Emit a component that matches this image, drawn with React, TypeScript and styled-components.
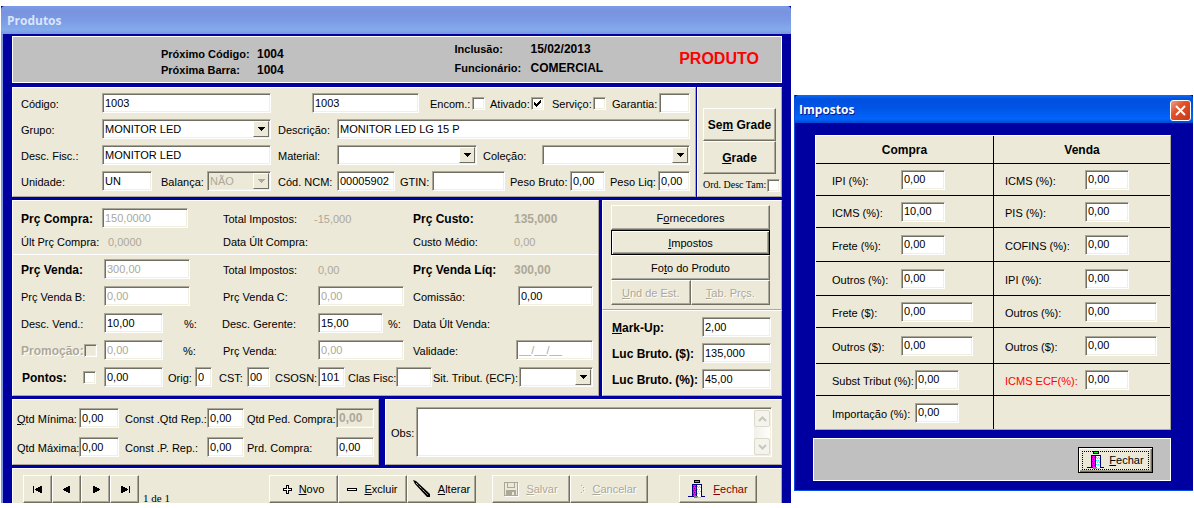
import React, { useId } from "react";
import styled, { createGlobalStyle, css } from "styled-components";

const face = "#ece9d8";
const navy = "#0000a0";
const shade = "#aca899";
const dark = "#716f64";

const GlobalStyle = createGlobalStyle`
  *, *::before, *::after { box-sizing: border-box; }
  body { margin: 0; background: #fff; }
  body, input, select, textarea, button {
    font-family: "Liberation Sans", Arial, sans-serif;
    font-size: 11px;
    line-height: 16px;
    color: #000;
  }
`;

const raised = css`
  border: 1px solid;
  border-color: #fff ${shade} ${shade} #fff;
`;
const sunken = css`
  border: 1px solid;
  border-color: ${shade} #fff #fff ${shade};
  box-shadow: inset 1px 1px ${dark}, inset -1px -1px #f1efe2;
`;
const etched = css`
  color: ${shade};
  text-shadow: 1px 1px #fff;
`;
const strong = css`
  font-weight: bold;
  font-size: 12px;
`;

const Page = styled.main`
  display: grid;
  grid-template-columns: minmax(0, 790fr) minmax(0, 399fr);
  gap: 3px;
  align-items: start;
  padding: 6px 1px 4px;
`;
const ProductWindow = styled.section`
  background: ${navy};
`;
const TaxWindow = styled.section`
  margin-top: 89px;
  background: ${navy};
  border: solid #0a4fe0;
  border-width: 0 0 1px 1px;
`;
const TitleBar = styled.header<{ $active?: boolean }>`
  display: flex;
  align-items: center;
  justify-content: space-between;
  height: 28px;
  padding: 2px 2px 0 ${(p) => (p.$active ? 4 : 6)}px;
  border-radius: 4px 4px 0 0;
  background: ${(p) =>
    p.$active
      ? "linear-gradient(#0a6cf5 0, #0050e0 14%, #0054e6 45%, #0265fb 85%, #0048cf 100%)"
      : "linear-gradient(#7a9be6 0, #7a93df 20%, #7b9ae4 50%, #83abec 85%, #7b96df 100%)"};
`;
const Title = styled.h1<{ $active?: boolean }>`
  margin: 0;
  font: 700 12px/18px "Open Sans", "Noto Sans", sans-serif;
  color: ${(p) => (p.$active ? "#fff" : "#dbe5f9")};
  text-shadow: ${(p) => (p.$active ? "1px 1px #0a1883" : "none")};
`;
const CloseButton = styled.button`
  display: grid;
  place-items: center;
  width: 21px;
  height: 21px;
  padding: 0;
  border: 1px solid #fff;
  border-radius: 3px;
  background: linear-gradient(135deg, #f0a088, #e0512c 40%, #c83a16);
`;

const ProductBody = styled.div`
  display: grid;
  grid-template-columns: minmax(0, 1fr);
  gap: 3px;
  padding: 2px 9px 0;
  border-left: 2px solid #7b96df;
`;
const Split = styled.div<{ $cols: string; $gap: number }>`
  display: grid;
  grid-template-columns: ${(p) => p.$cols};
  gap: ${(p) => p.$gap}px;
`;
const Stack = styled.div`
  display: flex;
  flex-direction: column;
`;
const Panel = styled.div<{ $pad: string; $gap?: number }>`
  ${raised}
  display: flex;
  flex-direction: column;
  gap: ${(p) => p.$gap ?? 0}px;
  padding: ${(p) => p.$pad};
  background: ${face};
`;
const Banner = styled.div`
  display: grid;
  grid-template-columns: 294fr 225fr 102fr;
  align-items: end;
  height: 47px;
  margin-bottom: 1px;
  padding: 0 0 4px 148px;
  border: 1px solid #fff;
  background: #c0c0c0;
`;
const Facts = styled.dl<{ $first: number; $line: number }>`
  display: grid;
  grid-template-columns: ${(p) => p.$first}px auto;
  margin: 0;
  font-weight: bold;
  line-height: ${(p) => p.$line}px;
  white-space: nowrap;
  dd { margin: 0; font-size: 12px; }
`;
const BannerName = styled.strong`
  align-self: center;
  padding-top: 2px;
  font: bold 16px/20px "Liberation Sans", Arial, sans-serif;
  color: #f00;
`;

const Row = styled.div<{ $h?: number }>`
  display: flex;
  align-items: center;
  height: ${(p) => p.$h ?? 20}px;
  white-space: nowrap;
`;
const Label = styled.label<{ $w?: number; $pl?: number; $bold?: boolean; $off?: boolean }>`
  flex: none;
  width: ${(p) => (p.$w ? p.$w + "px" : "auto")};
  padding: 2px 0 0 ${(p) => p.$pl ?? 0}px;
  ${(p) => p.$bold && strong}
  ${(p) => p.$off && etched}
`;
const Value = styled.output<{ $w?: number; $bold?: boolean }>`
  flex: none;
  width: ${(p) => (p.$w ? p.$w + "px" : "auto")};
  padding-top: 2px;
  color: ${shade};
  ${(p) => p.$bold && strong}
`;
const Input = styled.input<{ $w?: number; $ml?: number; $flat?: boolean; $bold?: boolean }>`
  ${sunken}
  flex: ${(p) => (p.$w ? `0 0 ${p.$w}px` : "1 1 0")};
  width: 0;
  min-width: 0;
  height: 20px;
  margin: 0 0 0 ${(p) => p.$ml ?? 0}px;
  padding: 0 2px 1px;
  border-radius: 0;
  background: ${(p) => (p.$flat ? face : "#fff")};
  ${(p) => p.$bold && strong}
  &:disabled { color: ${shade}; }
`;
const SelectFrame = styled.span<{ $w?: number; $off?: boolean }>`
  ${sunken}
  display: flex;
  flex: ${(p) => (p.$w ? `0 0 ${p.$w}px` : "1 1 0")};
  min-width: 0;
  height: 20px;
  padding: 1px;
  background: ${(p) => (p.$off ? face : "#fff")};
`;
const NativeSelect = styled.select`
  flex: 1 1 0;
  min-width: 0;
  padding: 0 1px 1px;
  border: 0;
  appearance: none;
  background: transparent;
  &:disabled { color: ${shade}; opacity: 1; }
`;
const Arrow = styled.span`
  ${raised}
  display: grid;
  place-items: center;
  flex: 0 0 16px;
  border-color: #fff ${dark} ${dark} #fff;
  background: ${face};
`;
const CheckFrame = styled.span<{ $ml?: number; $mr?: number }>`
  display: inline-grid;
  flex: none;
  margin: 0 ${(p) => p.$mr ?? 0}px 0 ${(p) => p.$ml ?? 0}px;
  > * { grid-area: 1 / 1; place-self: center; }
  svg { pointer-events: none; }
`;
const NativeCheck = styled.input`
  ${sunken}
  width: 13px;
  height: 13px;
  margin: 0;
  appearance: none;
  background: #fff;
  &:disabled { background: ${face}; }
`;
const Rule = styled.hr`
  width: 100%;
  height: 1px;
  margin: 2px 0 4px;
  border: 0;
  background: #fff;
`;
const Fields = styled.div<{ $gap: number }>`
  display: grid;
  grid-template-columns: minmax(0, 1fr);
  gap: ${(p) => p.$gap}px;
  padding: 0 5px 0 8px;
`;

const Button = styled.button<{ $w?: number; $h?: number; $bold?: boolean; $default?: boolean; $color?: string }>`
  display: flex;
  align-items: center;
  justify-content: center;
  gap: 7px;
  flex: ${(p) => (p.$w ? `0 0 ${p.$w}px` : "1 1 0")};
  min-width: 0;
  height: ${(p) => p.$h ?? 25}px;
  min-height: ${(p) => p.$h ?? 25}px;
  padding: 0;
  border: 1px solid;
  border-color: ${(p) => (p.$default ? "#000" : `#fff ${dark} ${dark} #fff`)};
  box-shadow: ${(p) =>
    p.$default ? `inset 1px 1px #fff, inset -1px -1px ${dark}, inset -2px -2px ${shade}` : `inset -1px -1px ${shade}`};
  border-radius: 0;
  background: ${face};
  color: ${(p) => p.$color ?? "#000"};
  white-space: nowrap;
  ${(p) => p.$bold && strong}
  &:disabled { ${etched} }
  svg { flex: none; }
`;
const ButtonPair = styled.div`
  display: flex;
`;
const SmallLabel = styled.label`
  font: 10px/12px "Liberation Serif", serif;
`;
const MemoRow = styled.div`
  display: flex;
  align-items: center;
`;
const Memo = styled.div`
  ${sunken}
  display: flex;
  flex: 1 1 0;
  height: 50px;
  padding: 2px 1px 1px 2px;
  background: #fff;
`;
const MemoText = styled.textarea`
  flex: 1 1 0;
  min-width: 0;
  border: 0;
  padding: 0 2px;
  resize: none;
  overflow: hidden;
  background: transparent;
`;
const ScrollTrack = styled.div`
  display: flex;
  flex-direction: column;
  justify-content: space-between;
  width: 16px;
  background: linear-gradient(90deg, #f3f0ea, #fefefb);
`;
const ScrollButton = styled.button`
  display: grid;
  place-items: center;
  width: 16px;
  height: 17px;
  padding: 0;
  border: 1px solid #dcdac8;
  border-radius: 2px;
  background: #f4f3ee;
`;
const Toolbar = styled.div`
  display: flex;
  align-items: flex-end;
  padding: 6px 24px 0 10px;
  border: solid #fff;
  border-width: 1px 0 0 1px;
  border-right: 1px solid ${shade};
  background: ${face};
`;
const Group = styled.div<{ $mr?: number }>`
  display: flex;
  flex: none;
  margin-right: ${(p) => p.$mr ?? 0}px;
`;
const Position = styled.span`
  flex: 1 1 0;
  padding-left: 4px;
  font: 11px/10px "Liberation Serif", serif;
  white-space: nowrap;
`;

const TaxBody = styled.div`
  padding: 12px 22px 9px 18px;
`;
const TaxTable = styled.table`
  ${raised}
  width: calc(100% - 2px);
  margin: 0 0 8px 2px;
  border-collapse: separate;
  border-spacing: 0;
  table-layout: fixed;
  background: ${face};
  th, td { padding: 0; border-top: 1px solid #000; }
  th { border-top: 0; font-size: 12px; }
  th + th, td + td { border-left: 1px solid #000; }
`;
const TaxRow = styled.tr<{ $h: number }>`
  height: ${(p) => p.$h}px;
`;
const TaxField = styled.div<{ $pl: number; $red?: boolean }>`
  display: flex;
  align-items: center;
  padding-left: ${(p) => p.$pl}px;
  white-space: nowrap;
  color: ${(p) => (p.$red ? "#f00" : "inherit")};
`;
const TaxFooter = styled.footer`
  display: flex;
  justify-content: flex-end;
  padding: 8px 17px 7px;
  border: 1px solid #fff;
  background: #c0c0c0;
`;
const FocusRing = styled.span`
  display: flex;
  align-items: center;
  gap: 4px;
  height: 19px;
  padding: 0 4px;
  border: 1px dotted #000;
`;

function Down({ off }: { off?: boolean }) {
  return (
    <svg width="7" height="4" shapeRendering="crispEdges" aria-hidden="true">
      <path d="M0 0h7v1h-1v1h-1v1h-1v1h-1v-1h-1v-1h-1v-1h-1z" fill={off ? shade : "#000"} />
    </svg>
  );
}
type SelectProps = { id: string; w?: number; value?: string; off?: boolean };
function Select({ id, w, value = "", off }: SelectProps) {
  return (
    <SelectFrame $w={w} $off={off}>
      <NativeSelect id={id} disabled={off} defaultValue={value}>
        <option value={value}>{value}</option>
      </NativeSelect>
      <Arrow><Down off={off} /></Arrow>
    </SelectFrame>
  );
}
type CheckProps = { id: string; on?: boolean; off?: boolean; ml?: number; mr?: number };
function Check({ id, on, off, ml, mr }: CheckProps) {
  return (
    <CheckFrame $ml={ml} $mr={mr}>
      <NativeCheck type="checkbox" id={id} defaultChecked={on} disabled={off} />
      {on && (
        <svg width="7" height="7" shapeRendering="crispEdges" aria-hidden="true">
          <path d="M0 2h1v1h1v1h1v-1h1v-1h1v-1h1v-1h1v3h-1v1h-1v1h-1v1h-1v1h-1v-1h-1v-1h-1z" />
        </svg>
      )}
    </CheckFrame>
  );
}
type FieldProps = {
  label: React.ReactNode;
  w: number;
  pl?: number;
  bold?: boolean;
  value?: string;
  iw?: number;
  off?: boolean;
  flat?: boolean;
  boldValue?: boolean;
};
function Field({ label, w, pl, bold, value = "", iw, off, flat, boldValue }: FieldProps) {
  const id = useId();
  return (
    <>
      <Label htmlFor={id} $w={w} $pl={pl} $bold={bold}>{label}</Label>
      <Input id={id} $w={iw} defaultValue={value} disabled={off} $flat={flat} $bold={boldValue} />
    </>
  );
}
function Read({ label, w, pl, bold, value = "", vw }: FieldProps & { vw?: number }) {
  const id = useId();
  return (
    <>
      <Label htmlFor={id} $w={w} $pl={pl} $bold={bold}>{label}</Label>
      <Value id={id} $w={vw} $bold={bold}>{value}</Value>
    </>
  );
}

function NavIcon({ d }: { d: string }) {
  return (
    <svg width="12" height="9" viewBox="0 0 12 9" shapeRendering="crispEdges" aria-hidden="true">
      <path d={d} />
    </svg>
  );
}
function DoorIcon() {
  return (
    <svg width="18" height="19" viewBox="0 0 18 19" shapeRendering="crispEdges" aria-hidden="true">
      <path d="M6 0h6v3H6z" />
      <path d="M7 1h4v1H7z" fill="#0f0" />
      <path d="M4 4h10v12h3v1H0v-1h4z" fill="#000080" />
      <path d="M5 5h4v11H5z" fill="#f0f" />
      <path d="M5 6h1v1h-1zM7 6h1v1h-1zM6 8h1v1h-1zM8 8h1v1h-1zM5 10h1v1h-1zM7 10h1v1h-1zM6 12h1v1h-1zM8 12h1v1h-1zM5 14h1v1h-1zM7 14h1v1h-1z" fill="#800080" />
      <path d="M8 5h1v12H8z" fill="#000080" />
      <path d="M9 5h4v12H9z" fill="#fff" />
      <path d="M9 6h1v1h-1zM11 6h1v1h-1zM10 7h1v1h-1zM12 7h1v1h-1zM9 9h1v1h-1zM11 9h1v1h-1zM10 11h1v1h-1zM12 11h1v1h-1zM9 13h1v1h-1zM11 13h1v1h-1z" fill="#0ff" />
      <path d="M6 16h4v2H6z" fill="#808080" />
      <path d="M9 17h4v1H9z" fill="#c0c0c0" />
    </svg>
  );
}
function PlusIcon() {
  return (
    <svg width="9" height="9" viewBox="0 0 9 9" shapeRendering="crispEdges" aria-hidden="true">
      <path d="M3 0h3v3h3v3H6v3H3V6H0V3h3z" />
      <path d="M4 1h1v3h3v1H5v3H4V5H1V4h3z" fill="#fff" />
    </svg>
  );
}
function MinusIcon() {
  return (
    <svg width="10" height="3" viewBox="0 0 10 3" shapeRendering="crispEdges" aria-hidden="true">
      <path d="M0 0h10v3H0z" />
      <path d="M1 1h8v1H1z" fill="#fff" />
    </svg>
  );
}
function PenIcon() {
  return (
    <svg width="18" height="18" viewBox="0 0 18 18" aria-hidden="true">
      <path d="M0 0l3 1 14 13v3h-3L2 4z" />
      <path d="M3 3l9 9" stroke="#fff" strokeWidth="1" strokeDasharray="1 1" />
      <path d="M12 12l3 3" stroke="#808080" strokeWidth="1" />
    </svg>
  );
}
function DiskIcon() {
  return (
    <svg width="15" height="15" viewBox="0 0 15 15" shapeRendering="crispEdges" aria-hidden="true">
      <path d="M14 1h1v14H1v-1h13z" fill="#fff" />
      <path d="M0 0h14v14H0zM1 1v12h1V8h10v5h1V1h-2v5H3V1zM4 1v4h6V1z" fill={shade} fillRule="evenodd" />
      <path d="M3 9h8v4H3z" fill={shade} />
      <path d="M8 10h2v3H8z" fill={face} />
    </svg>
  );
}
function CancelIcon() {
  return (
    <svg width="4" height="9" viewBox="0 0 4 9" shapeRendering="crispEdges" aria-hidden="true">
      <path d="M1 1h1v1H1zM3 3h1v1H3zM3 6h1v1H3zM1 8h1v1H1z" fill="#fff" />
      <path d="M0 0h1v1H0zM2 2h1v1H2zM2 5h1v1H2zM0 7h1v1H0z" fill={shade} />
    </svg>
  );
}
function Chevron({ d }: { d: string }) {
  return (
    <svg width="9" height="6" viewBox="0 0 9 6" aria-hidden="true">
      <path d={d} fill="none" stroke="#c9c7ba" strokeWidth="2" />
    </svg>
  );
}
const NAV = [
  ["Primeiro", "M1 1h1v7H1zM3 4h1V3h2V2h2V1h2v7H8V7H6V6H4V5H3z"],
  ["Anterior", "M2 4h1V3h2V2h2V1h2v7H7V7H5V6H3V5H2z"],
  ["Próximo", "M10 4H9V3H7V2H5V1H3v7h2V7h2V6h2V5h1z"],
  ["Último", "M10 1h1v7h-1zM9 4H8V3H6V2H4V1H2v7h2V7h2V6h2V5h1z"],
];

type Tax = { name: string; value: string; wide?: boolean; labelW?: number; red?: boolean };
const TAXES: { h: number; buy: Tax; sell?: Tax }[] = [
  { h: 32, buy: { name: "IPI (%):", value: "0,00" }, sell: { name: "ICMS (%):", value: "0,00" } },
  { h: 32, buy: { name: "ICMS (%):", value: "10,00" }, sell: { name: "PIS (%):", value: "0,00" } },
  { h: 34, buy: { name: "Frete (%):", value: "0,00" }, sell: { name: "COFINS (%):", value: "0,00" } },
  { h: 34, buy: { name: "Outros (%):", value: "0,00" }, sell: { name: "IPI (%):", value: "0,00" } },
  { h: 32, buy: { name: "Frete ($):", value: "0,00", wide: true }, sell: { name: "Outros (%):", value: "0,00", wide: true } },
  { h: 36, buy: { name: "Outros ($):", value: "0,00", wide: true }, sell: { name: "Outros ($):", value: "0,00", wide: true } },
  { h: 32, buy: { name: "Subst Tribut (%):", value: "0,00", labelW: 83 }, sell: { name: "ICMS ECF(%):", value: "0,00", red: true } },
  { h: 34, buy: { name: "Importação (%):", value: "0,00", labelW: 83 } },
];
function TaxCell({ tax, pl, labelW }: { tax: Tax; pl: number; labelW: number }) {
  return (
    <TaxField $pl={pl} $red={tax.red}>
      <Field label={tax.name} w={tax.labelW ?? labelW} value={tax.value} iw={tax.wide ? 72 : 44} />
    </TaxField>
  );
}

export default function App() {
  return (
    <>
      <GlobalStyle />
      <Page>
        <ProductWindow>
          <TitleBar><Title>Produtos</Title></TitleBar>
          <ProductBody>
            <Banner>
              <Facts $first={96} $line={16}>
                <dt>Próximo Código:</dt><dd>1004</dd>
                <dt>Próxima Barra:</dt><dd>1004</dd>
              </Facts>
              <Facts $first={76} $line={19}>
                <dt>Inclusão:</dt><dd>15/02/2013</dd>
                <dt>Funcionário:</dt><dd>COMERCIAL</dd>
              </Facts>
              <BannerName>PRODUTO</BannerName>
            </Banner>

            <Split $cols="minmax(0, 1fr) 85px" $gap={1}>
              <Panel $pad="5px 5px 5px 8px" $gap={6}>
                <Row>
                  <Field label="Código:" w={81} value="1003" iw={169} />
                  <Input aria-label="Código de barras" $ml={41} defaultValue="1003" />
                  <Label htmlFor="encom" $w={53} $pl={11}>Encom.:</Label><Check id="encom" />
                  <Label htmlFor="ativado" $w={46} $pl={5}>Ativado:</Label><Check id="ativado" on />
                  <Label htmlFor="servico" $w={49} $pl={8}>Serviço:</Label><Check id="servico" />
                  <Field label="Garantia:" w={53} pl={6} iw={31} />
                </Row>
                <Row>
                  <Label htmlFor="grupo" $w={81}>Grupo:</Label><Select id="grupo" w={169} value="MONITOR LED" />
                  <Field label="Descrição:" w={66} pl={7} value="MONITOR LED LG 15 P" />
                </Row>
                <Row>
                  <Field label="Desc. Fisc.:" w={81} value="MONITOR LED" iw={169} />
                  <Label htmlFor="material" $w={66} $pl={7}>Material:</Label><Select id="material" w={140} />
                  <Label htmlFor="colecao" $w={65} $pl={6}>Coleção:</Label><Select id="colecao" />
                </Row>
                <Row>
                  <Field label="Unidade:" w={81} value="UN" iw={50} />
                  <Label htmlFor="balanca" $w={55} $pl={9}>Balança:</Label><Select id="balanca" w={64} value="NÃO" off />
                  <Field label="Cód. NCM:" w={66} pl={7} value="00005902" iw={58} />
                  <Field label="GTIN:" w={37} pl={5} />
                  <Field label="Peso Bruto:" w={65} pl={5} value="0,00" iw={35} />
                  <Field label="Peso Liq:" w={53} pl={5} value="0,00" iw={32} />
                </Row>
              </Panel>
              <Panel $pad="20px 5px 0">
                <Stack>
                  <Button $h={33} $bold><span>Se<u>m</u> Grade</span></Button>
                  <Button $h={33} $bold><span><u>G</u>rade</span></Button>
                </Stack>
                <Row $h={22}>
                  <SmallLabel htmlFor="ord">Ord. Desc Tam:</SmallLabel><Check id="ord" ml={1} />
                </Row>
              </Panel>
            </Split>

            <Split $cols="minmax(0, 1fr) 180px" $gap={3}>
              <Panel $pad="6px 0 8px">
                <Fields $gap={1}>
                  <Row $h={22}>
                    <Field label="Prç Compra:" bold w={81} value="150,0000" iw={86} off />
                    <Read label="Total Impostos:" w={126} pl={35} value="-15,000" vw={66} />
                    <Read label="Prç Custo:" bold w={134} pl={33} value="135,000" />
                  </Row>
                  <Row $h={22}>
                    <Read label="Últ Prç Compra:" w={87} value="0,0000" vw={80} />
                    <Read label="Data Últ Compra:" w={126} pl={35} vw={66} />
                    <Read label="Custo Médio:" w={134} pl={33} value="0,00" />
                  </Row>
                </Fields>
                <Rule />
                <Fields $gap={7}>
                  <Row>
                    <Field label="Prç Venda:" bold w={83} value="300,00" iw={86} off />
                    <Read label="Total Impostos:" w={128} pl={33} value="0,00" vw={62} />
                    <Read label="Prç Venda Líq:" bold w={134} pl={33} value="300,00" />
                  </Row>
                  <Row>
                    <Field label="Prç Venda B:" w={83} value="0,00" iw={86} off />
                    <Field label="Prç Venda C:" w={128} pl={33} value="0,00" iw={86} off />
                    <Field label="Comissão:" w={114} pl={9} value="0,00" />
                  </Row>
                  <Row>
                    <Field label="Desc. Vend.:" w={83} value="10,00" iw={59} />
                    <Label as="span" $w={59} $pl={21}>%:</Label>
                    <Field label="Desc. Gerente:" w={96} value="15,00" iw={65} />
                    <Label as="span" $w={30} $pl={5}>%:</Label>
                    <Label as="span">Data Últ Venda:</Label>
                  </Row>
                  <Row>
                    <Label htmlFor="promo" $w={63} $bold $off>Promoção:</Label><Check id="promo" off mr={7} />
                    <Input aria-label="Desconto da promoção" $w={59} defaultValue="0,00" disabled />
                    <Label as="span" $w={60} $pl={20}>%:</Label>
                    <Field label="Prç Venda:" w={95} value="0,00" iw={86} off />
                    <Field label="Validade:" w={112} pl={9} value="__/__/__" off />
                  </Row>
                  <Row>
                    <Label htmlFor="pontos" $w={62} $pl={1} $bold>Pontos:</Label><Check id="pontos" mr={8} />
                    <Input aria-label="Valor dos pontos" $w={59} defaultValue="0,00" />
                    <Field label="Orig:" w={32} pl={5} value="0" iw={17} />
                    <Field label="CST:" w={35} pl={7} value="00" iw={23} />
                    <Field label="CSOSN:" w={48} pl={5} value="101" iw={27} />
                    <Field label="Clas Fisc:" w={51} pl={3} iw={36} />
                    <Label htmlFor="ecf" $w={87} $pl={1}>Sit. Tribut. (ECF):</Label><Select id="ecf" />
                  </Row>
                </Fields>
              </Panel>
              <Stack>
                <Panel $pad="4px 11px 4px 8px">
                  <Button><span>F<u>o</u>rnecedores</span></Button>
                  <Button $default><span><u>I</u>mpostos</span></Button>
                  <Button><span>Fo<u>t</u>o do Produto</span></Button>
                  <ButtonPair>
                    <Button disabled><span><u>U</u>nd de Est.</span></Button>
                    <Button disabled><span><u>T</u>ab. Prçs.</span></Button>
                  </ButtonPair>
                </Panel>
                <Panel $pad="6px 10px 6px 9px" $gap={6}>
                  <Row><Field label={<><u>M</u>ark-Up:</>} bold w={90} value="2,00" /></Row>
                  <Row><Field label="Luc Bruto. ($):" bold w={90} value="135,000" /></Row>
                  <Row><Field label="Luc Bruto. (%):" bold w={90} value="45,00" /></Row>
                </Panel>
              </Stack>
            </Split>

            <Split $cols="minmax(0, 367fr) minmax(0, 397fr)" $gap={6}>
              <Panel $pad="8px 4px 7px" $gap={9}>
                <Row>
                  <Field label={<><u>Q</u>td Mínima:</>} w={62} value="0,00" iw={40} />
                  <Field label="Const .Qtd Rep.:" w={88} pl={6} value="0,00" iw={37} />
                  <Field label="Qtd Ped. Compra:" w={92} pl={3} value="0,00" off flat boldValue />
                </Row>
                <Row>
                  <Field label="Qtd Máxima:" w={62} value="0,00" iw={40} />
                  <Field label="Const .P. Rep.:" w={88} pl={6} value="0,00" iw={37} />
                  <Field label="Prd. Compra:" w={92} pl={3} value="0,00" />
                </Row>
              </Panel>
              <Panel $pad="7px 9px 7px 5px">
                <MemoRow>
                  <Label htmlFor="obs" $w={25}>Obs:</Label>
                  <Memo>
                    <MemoText id="obs" />
                    <ScrollTrack>
                      <ScrollButton aria-label="Rolar para cima" disabled><Chevron d="M1 5l3.5-3.5L8 5" /></ScrollButton>
                      <ScrollButton aria-label="Rolar para baixo" disabled><Chevron d="M1 1l3.5 3.5L8 1" /></ScrollButton>
                    </ScrollTrack>
                  </Memo>
                </MemoRow>
              </Panel>
            </Split>

            <Toolbar>
              <Group>
                {NAV.map(([name, d]) => (
                  <Button key={name} aria-label={name} $w={29} $h={28}><NavIcon d={d} /></Button>
                ))}
              </Group>
              <Position>1 de 1</Position>
              <Group $mr={16}>
                <Button $w={69} $h={28}><PlusIcon /><span><u>N</u>ovo</span></Button>
                <Button $w={69} $h={28}><MinusIcon /><span><u>E</u>xcluir</span></Button>
                <Button $w={69} $h={28}><PenIcon /><span><u>A</u>lterar</span></Button>
              </Group>
              <Group $mr={31}>
                <Button $w={78} $h={28} disabled><DiskIcon /><span><u>S</u>alvar</span></Button>
                <Button $w={78} $h={28} disabled><CancelIcon /><span><u>C</u>ancelar</span></Button>
              </Group>
              <Group>
                <Button $w={78} $h={28} $color="#800000"><DoorIcon /><span><u>F</u>echar</span></Button>
              </Group>
            </Toolbar>
          </ProductBody>
        </ProductWindow>

        <TaxWindow>
          <TitleBar $active>
            <Title $active>Impostos</Title>
            <CloseButton aria-label="Fechar janela">
              <svg width="13" height="13" viewBox="0 0 13 13" aria-hidden="true">
                <path d="M2 2l9 9M11 2l-9 9" stroke="#fff" strokeWidth="2" />
              </svg>
            </CloseButton>
          </TitleBar>
          <TaxBody>
            <TaxTable>
              <thead><TaxRow $h={27}><th>Compra</th><th>Venda</th></TaxRow></thead>
              <tbody>
                {TAXES.map((t, i) => (
                  <TaxRow key={i} $h={t.h}>
                    <td><TaxCell tax={t.buy} pl={16} labelW={69} /></td>
                    <td>{t.sell && <TaxCell tax={t.sell} pl={11} labelW={80} />}</td>
                  </TaxRow>
                ))}
              </tbody>
            </TaxTable>
            <TaxFooter>
              <Button $w={75} $h={26} $default><FocusRing><DoorIcon /><span><u>F</u>echar</span></FocusRing></Button>
            </TaxFooter>
          </TaxBody>
        </TaxWindow>
      </Page>
    </>
  );
}
